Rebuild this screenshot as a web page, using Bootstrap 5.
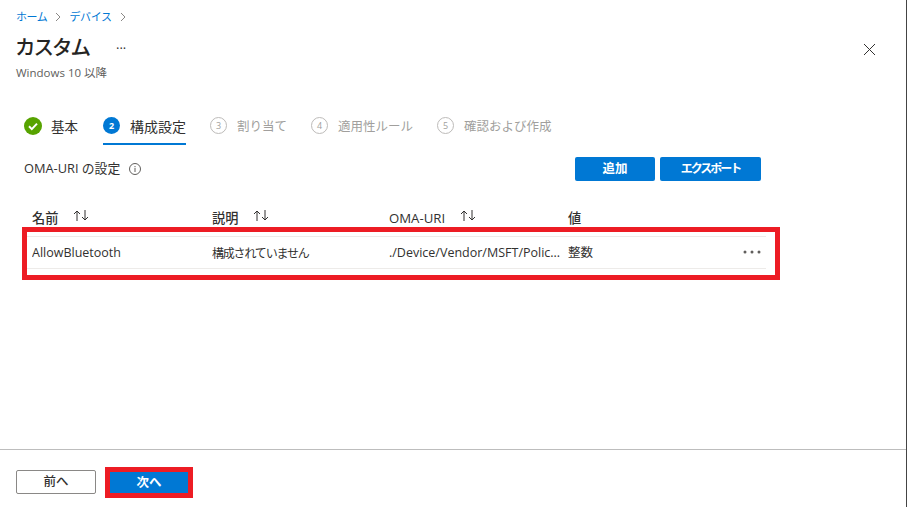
<!DOCTYPE html>
<html lang="ja">
<head>
  <meta charset="UTF-8">
  <title>カスタム</title>
  <link href="https://cdn.jsdelivr.net/npm/bootstrap@5.3.3/dist/css/bootstrap.min.css" rel="stylesheet">
  <style>
    html, body { height: 507px; overflow: hidden; }
    body {
      font-family: "Open Sans", "Noto Sans CJK JP", sans-serif;
      font-size: 12.5px;
      color: #323130;
      background: #fff;
    }
    .blade { width: 907px; height: 507px; border-right: 1px solid #444; }
    .crumbs { padding: 9px 0 0 16px; height: 33px; line-height: 16px; font-size: 11px; letter-spacing: -.4px; color: #0078d4; }
    .crumbs svg { margin: 3px 8px 0 8px; }
    .blade-head { padding-left: 15px; height: 29px; }
    .blade-title { font-size: 20.5px; letter-spacing: -2px; font-weight: 500; line-height: 29px; margin: 0; color: #252423; }
    .title-more { margin: 0 0 0 27px; font-size: 13px; line-height: 20px; }
    .close-x { margin: 10px 30px 0 0; }
    .subtitle { padding-left: 16px; font-size: 11.5px; line-height: 16px; margin-top: 3px; color: #605e5c; }
    .steps { margin: 36px 0 0 24px; height: 28px; gap: 24px; }
    .step-item { height: 28px; padding-bottom: 7px; line-height: 20px; font-size: 13.5px; }
    .step-item.first-step { margin-right: 1px; }
    .step-item.on { border-bottom: 2px solid #0078d4; font-size: 14px; }
    .step-item.off { color: #a19f9d; font-size: 12.5px; }
    .step-item .dot { margin-right: 9px; }
    .step-no {
      width: 17px; height: 17px; border-radius: 50%; margin-right: 10px;
      font-size: 9px; line-height: 1;
    }
    .step-no.cur { background: #0078d4; color: #fff; font-weight: 700; }
    .step-no.idle { border: 1px solid #bdbbb9; color: #a19f9d; }
    .toolbar { margin: 12px 145px 0 24px; height: 24px; font-size: 12.8px; }
    .info-i { margin-left: 9px; }
    .az-btn {
      height: 24px; padding: 0; border-radius: 2px; border: 0;
      background: #0078d4; color: #fff; font-size: 12.5px; font-weight: 600; line-height: 24px;
    }
    .az-btn:hover { background: #106ebe; color: #fff; }
    .w-add { width: 80px; }
    .w-export { width: 101px; margin-left: 5px; font-size: 12px; letter-spacing: -2px; }
    .grid-head { margin: 27px 0 0 32px; height: 19px; line-height: 20px; font-size: 13.2px; font-weight: 500; }
    .cell-a { width: 180px; flex: none; }
    .cell-b { width: 177px; flex: none; }
    .cell-c { width: 179px; flex: none; }
    .cell-d { width: 100px; flex: none; }
    .jp-tight { font-size: 12px; letter-spacing: -1.2px; }
    .sort-ic { margin-left: 15px; position: relative; top: -4px; }
    .hl-box { margin: 0 0 0 22px; width: 758px; height: 53px; border: 5px solid #ed1c24; padding-top: 4px; }
    .grid-row { margin-right: 9px; height: 33px; padding: 2px 0 0 5px; border-top: 1px solid #edebe9; border-bottom: 1px solid #edebe9; }
    .row-more { margin: -3px 5px 0 auto; flex: none; }
    .spacer-fill { flex: 1 1 auto; }
    .foot { border-top: 1px solid #bdbdbd; height: 58px; padding: 20px 0 0 16px; }
    .back-btn {
      width: 80px; height: 24px; padding: 0; font-size: 12.5px; line-height: 22px; font-weight: 500;
      background: #fff; border: 1px solid #8a8886; border-radius: 2px; color: #323130;
    }
    .next-wrap { margin: -3px 0 0 9px; border: 5px solid #ed1c24; width: 88px; height: 31px; }
    .next-btn { width: 100%; height: 21px; line-height: 21px; border-radius: 0; }
  </style>
</head>
<body>
  <div class="blade d-flex flex-column">
    <div class="crumbs d-flex align-items-start">
      <span>ホーム</span>
      <svg width="6" height="10" viewBox="0 0 6 10"><path d="M1 1l4 4-4 4" fill="none" stroke="#8a8886"/></svg>
      <span>デバイス</span>
      <svg width="6" height="10" viewBox="0 0 6 10"><path d="M1 1l4 4-4 4" fill="none" stroke="#8a8886"/></svg>
    </div>
    <div class="blade-head d-flex justify-content-between">
      <div class="d-flex align-items-center">
        <h1 class="blade-title">カスタム</h1>
        <span class="title-more">···</span>
      </div>
      <svg class="close-x" width="13" height="13" viewBox="0 0 13 13"><path d="M1 1l11 11M12 1L1 12" stroke="#323130" fill="none"/></svg>
    </div>
    <div class="subtitle">Windows 10 以降</div>

    <div class="steps d-flex">
      <div class="step-item first-step d-flex align-items-start">
        <svg class="dot" width="18" height="18" viewBox="0 0 18 18"><circle cx="9" cy="9" r="9" fill="#57a300"/><path d="M5 9.3l2.8 2.8L13 6.6" fill="none" stroke="#fff" stroke-width="2"/></svg>
        <span>基本</span>
      </div>
      <div class="step-item on d-flex align-items-start">
        <span class="step-no cur d-flex align-items-center justify-content-center">2</span>
        <span>構成設定</span>
      </div>
      <div class="step-item off d-flex align-items-start">
        <span class="step-no idle d-flex align-items-center justify-content-center">3</span>
        <span>割り当て</span>
      </div>
      <div class="step-item off d-flex align-items-start">
        <span class="step-no idle d-flex align-items-center justify-content-center">4</span>
        <span>適用性ルール</span>
      </div>
      <div class="step-item off d-flex align-items-start">
        <span class="step-no idle d-flex align-items-center justify-content-center">5</span>
        <span>確認および作成</span>
      </div>
    </div>

    <div class="toolbar d-flex align-items-center justify-content-between">
      <div class="d-flex align-items-center">
        <span>OMA-URI の設定</span>
        <svg class="info-i" width="12" height="12" viewBox="0 0 12 12"><circle cx="6" cy="6" r="5.5" fill="none" stroke="#605e5c"/><path d="M6 5v4M6 3v1.2" stroke="#605e5c"/></svg>
      </div>
      <div class="d-flex">
        <button type="button" class="btn az-btn w-add">追加</button>
        <button type="button" class="btn az-btn w-export">エクスポート</button>
      </div>
    </div>

    <div class="grid-head d-flex">
      <div class="cell-a">名前<svg class="sort-ic" width="17" height="11" viewBox="0 0 17 11"><path d="M4 11V1M1 4l3-3 3 3M12 0v10M9 7l3 3 3-3" fill="none" stroke="#323130"/></svg></div>
      <div class="cell-b">説明<svg class="sort-ic" width="17" height="11" viewBox="0 0 17 11"><path d="M4 11V1M1 4l3-3 3 3M12 0v10M9 7l3 3 3-3" fill="none" stroke="#323130"/></svg></div>
      <div class="cell-c">OMA-URI<svg class="sort-ic" width="17" height="11" viewBox="0 0 17 11"><path d="M4 11V1M1 4l3-3 3 3M12 0v10M9 7l3 3 3-3" fill="none" stroke="#323130"/></svg></div>
      <div class="cell-d">値</div>
    </div>

    <div class="hl-box">
      <div class="grid-row d-flex align-items-center">
        <div class="cell-a text-truncate">AllowBluetooth</div>
        <div class="cell-b text-truncate jp-tight">構成されていません</div>
        <div class="cell-c text-nowrap overflow-hidden">./Device/Vendor/MSFT/Polic...</div>
        <div class="cell-d">整数</div>
        <svg class="row-more" width="18" height="4" viewBox="0 0 18 4"><circle cx="2" cy="2" r="1.5" fill="#605e5c"/><circle cx="9" cy="2" r="1.5" fill="#605e5c"/><circle cx="16" cy="2" r="1.5" fill="#605e5c"/></svg>
      </div>
    </div>

    <div class="spacer-fill"></div>

    <div class="foot d-flex align-items-start">
      <button type="button" class="btn back-btn">前へ</button>
      <div class="next-wrap">
        <button type="button" class="btn az-btn next-btn d-block">次へ</button>
      </div>
    </div>
  </div>
  <script src="https://cdn.jsdelivr.net/npm/bootstrap@5.3.3/dist/js/bootstrap.bundle.min.js"></script>
</body>
</html>
